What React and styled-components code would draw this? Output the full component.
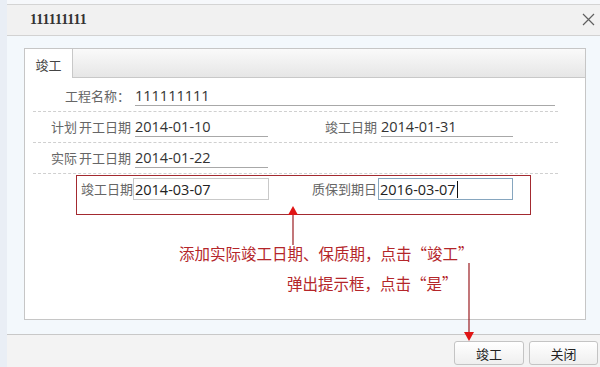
import React from 'react';
import styled, { createGlobalStyle } from 'styled-components';

const GlobalStyle = createGlobalStyle`
    * {
        box-sizing: border-box;
    }

    html, body {
        margin: 0;
        padding: 0;
        background: #e9eef5;
        font-family: "Noto Sans CJK SC", "Noto Sans", sans-serif;
    }
`;

const CJK = `"Noto Sans CJK SC", "Noto Sans", sans-serif`;
const NUM = `"Open Sans", "Noto Sans CJK SC", sans-serif`;

const Page = styled.div`
    position: relative;
    width: 600px;
    height: 367px;
    padding-left: 7px;
    background: #e9eef5;
    display: flex;
    overflow: hidden;
`;

const Shell = styled.div`
    flex: 1;
    display: flex;
    flex-direction: column;
    padding-top: 4px;
    background: #f6f8fb;
`;

const Dialog = styled.div`
    flex: 1;
    display: flex;
    flex-direction: column;
    border-top: 1px solid #d4d4d4;
`;

const Header = styled.div`
    height: 31px;
    display: flex;
    align-items: center;
    justify-content: space-between;
    padding: 0 5px 1px 23px;
    background: #f1f1f1;
    border-bottom: 1px solid #d2d2d2;
`;

const Title = styled.span`
    font-family: "Liberation Serif", serif;
    font-weight: bold;
    font-size: 14px;
    color: #333;
`;

const CloseButton = styled.span`
    display: flex;
    width: 14px;
    height: 14px;
    align-items: center;
    justify-content: center;
`;

const Body = styled.div`
    height: 298px;
    padding: 12px 14px 14px 17px;
    background: #f3f8fc;
    display: flex;
`;

const Panel = styled.div`
    flex: 1;
    display: flex;
    flex-direction: column;
    border: 1px solid #c6c6c6;
    background: #fff;
`;

const TabBar = styled.div`
    height: 29px;
    display: flex;
    background: linear-gradient(#fafafa, #e6e6e6);
    border-bottom: 1px solid #c8c8c8;
`;

const Tab = styled.div`
    width: 48px;
    height: 29px;
    display: flex;
    align-items: center;
    justify-content: center;
    padding-top: 1px;
    background: #fff;
    border-right: 1px solid #c8c8c8;
    font-family: ${CJK};
    font-size: 13px;
    color: #444;
`;

const Content = styled.div`
    width: 533px;
    padding: 3px 0 0 8px;
`;

const Row = styled.div`
    height: 31px;
    display: flex;
    align-items: flex-end;
    padding-bottom: 5px;
    border-bottom: 1px dashed #d0d0d0;
`;

const Label = styled.span`
    width: ${(props) => props.width}px;
    flex-shrink: 0;
    text-align: right;
    padding-right: ${(props) => props.pad ?? 2}px;
    font-family: ${CJK};
    font-size: 13px;
    line-height: 20px;
    color: #666;
    white-space: nowrap;
    word-spacing: -1px;
`;

const Value = styled.span`
    width: ${(props) => props.width}px;
    height: 20px;
    margin-left: 2px;
    border-bottom: 1px solid #a8a8a8;
    font-family: ${NUM};
    font-size: 14.5px;
    line-height: 19px;
    color: #333;
`;

const Highlight = styled.div`
    width: 455px;
    height: 40px;
    margin: 1px 0 0 43px;
    padding: 2px 0 0 4px;
    border: 1px solid #a32a30;
    display: flex;
    align-items: flex-start;
`;

const InputLabel = styled(Label)`
    line-height: 22px;
`;

const Input = styled.div`
    width: ${(props) => props.width}px;
    height: 22px;
    padding-left: 1px;
    display: flex;
    align-items: center;
    border: 1px solid ${(props) => props.focused ? '#86a6bf' : '#c9c9c9'};
    font-family: ${NUM};
    font-size: 14.5px;
    color: #222;
`;

const Caret = styled.span`
    width: 1px;
    height: 17px;
    margin-left: 1px;
    background: #111;
`;

const Notes = styled.div`
    margin-top: 23px;
`;

const Note = styled.div`
    padding-left: ${(props) => props.indent}px;
    font-family: ${CJK};
    font-size: 15.5px;
    line-height: 30px;
    color: #b4262a;
    white-space: nowrap;
`;

const Footer = styled.div`
    flex: 1;
    display: flex;
    justify-content: flex-end;
    gap: 5px;
    padding: 6px 2px 0 0;
    background: #f3f3f3;
    border-top: 1px solid #c8c8c8;
`;

const Button = styled.button`
    width: ${(props) => props.width}px;
    height: 24px;
    padding: 0;
    border: 1px solid #c4c4c4;
    border-radius: 3px;
    background: linear-gradient(#ffffff, #efefef);
    font-family: ${CJK};
    font-size: 13px;
    color: #222;
`;

const Overlay = styled.svg`
    position: absolute;
    top: 0;
    left: 0;
    pointer-events: none;
`;

const App = () => {
    return (
        <Page>
            <GlobalStyle />
            <Shell>
                <Dialog>
                    <Header>
                        <Title>111111111</Title>
                        <CloseButton>
                            <svg width="13" height="13" viewBox="0 0 13 13">
                                <path d="M1 1 L12 12 M12 1 L1 12" stroke="#606060" strokeWidth="1.2" />
                            </svg>
                        </CloseButton>
                    </Header>
                    <Body>
                        <Panel>
                            <TabBar>
                                <Tab>竣工</Tab>
                            </TabBar>
                            <Content>
                                <Row>
                                    <Label width={100} pad={3}>工程名称：</Label>
                                    <Value width={420}>111111111</Value>
                                </Row>
                                <Row>
                                    <Label width={100}>计划 开工日期</Label>
                                    <Value width={133}>2014-01-10</Value>
                                    <Label width={111}>竣工日期</Label>
                                    <Value width={132}>2014-01-31</Value>
                                </Row>
                                <Row>
                                    <Label width={100}>实际 开工日期</Label>
                                    <Value width={133}>2014-01-22</Value>
                                </Row>
                                <Highlight>
                                    <InputLabel width={52} pad={0}>竣工日期</InputLabel>
                                    <Input width={136}>2014-03-07</Input>
                                    <InputLabel width={109} pad={1}>质保到期日</InputLabel>
                                    <Input width={135} focused>
                                        2016-03-07<Caret />
                                    </Input>
                                </Highlight>
                                <Notes>
                                    <Note indent={146}>添加实际竣工日期、保质期，点击“竣工”</Note>
                                    <Note indent={254}>弹出提示框，点击“是”</Note>
                                </Notes>
                            </Content>
                        </Panel>
                    </Body>
                    <Footer>
                        <Button width={70}>竣工</Button>
                        <Button width={69}>关闭</Button>
                    </Footer>
                </Dialog>
            </Shell>
            <Overlay width="600" height="367" viewBox="0 0 600 367">
                <line x1="293" y1="214" x2="293" y2="245" stroke="#9a1c20" strokeWidth="1.2" />
                <polygon points="293,206 288,215 298,215" fill="#e01515" />
                <line x1="469" y1="263" x2="469" y2="333" stroke="#9a1c20" strokeWidth="1.2" />
                <polygon points="464,332 474,332 469,341" fill="#e01515" />
            </Overlay>
        </Page>
    );
};

export default App;
